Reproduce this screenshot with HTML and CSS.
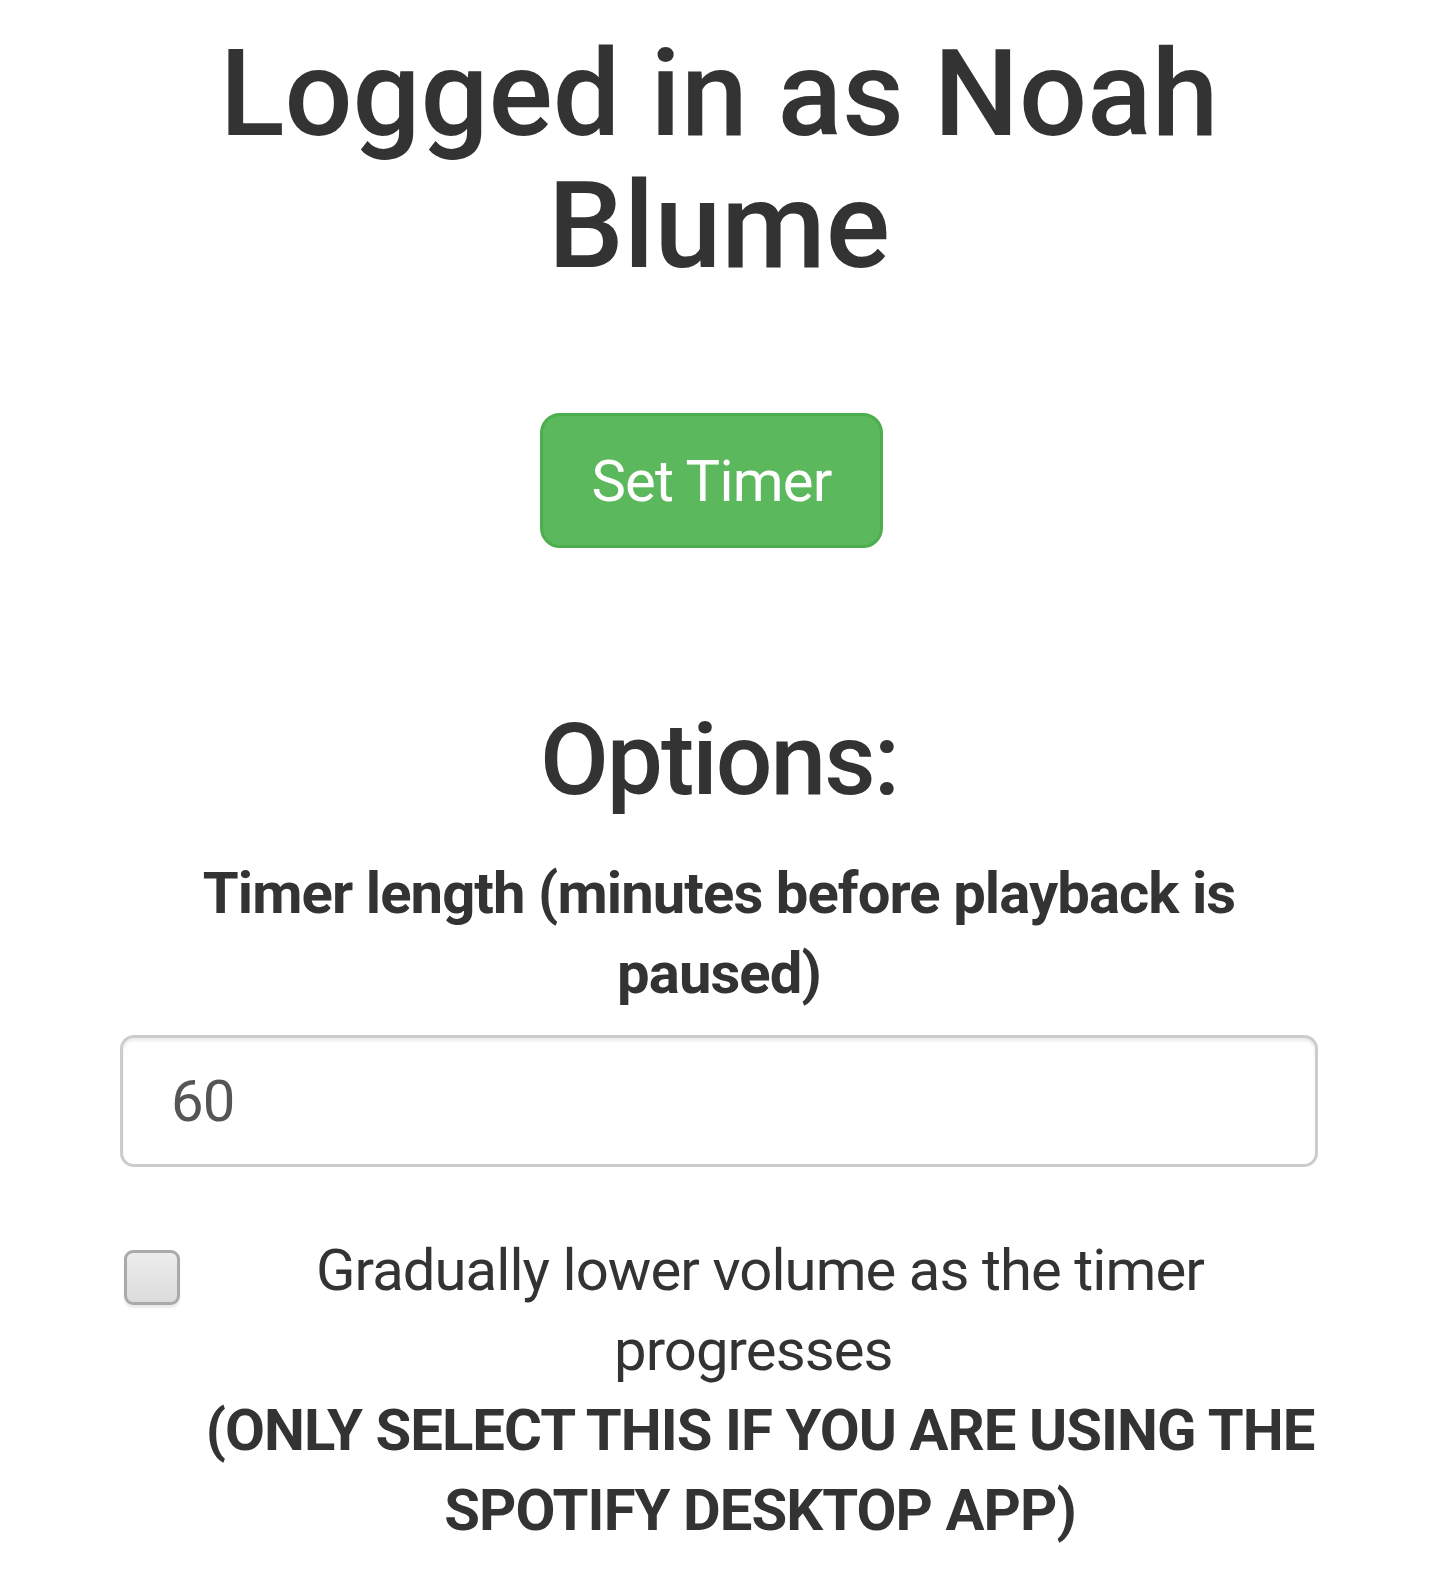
FILE: index.html
```html
<!DOCTYPE html>
<html lang="en">
<head>
<meta charset="utf-8">
<title>Sleep Timer</title>
<link rel="stylesheet" href="styles.css">
</head>
<body>
<div class="page">
  <h1 class="title">Logged in as Noah Blume</h1>
  <div class="actions">
    <button class="btn-set" type="button">Set Timer</button>
  </div>
  <h2 class="subtitle">Options:</h2>
  <label class="field-label" for="len">Timer length (minutes before playback is paused)</label>
  <input class="text-input" id="len" type="text" value="60">
  <div class="check-row">
    <div class="check-box-col"><span class="check-box"></span></div>
    <div class="check-text">
      <div class="check-main">Gradually lower volume as the timer progresses&nbsp;</div>
      <div class="check-note">(ONLY SELECT THIS IF YOU ARE USING THE SPOTIFY DESKTOP APP)</div>
    </div>
  </div>
</div>
</body>
</html>
```

FILE: styles.css
```css
html, body {
  margin: 0;
  padding: 0;
  background: #ffffff;
}
body {
  font-family: Roboto, "Liberation Sans", sans-serif;
  color: #333333;
}
.page {
  padding: 28px 122px 0 120px;
  display: flex;
  flex-direction: column;
}
.title {
  margin: 0;
  font-size: 120px;
  line-height: 132px;
  font-weight: 500;
  text-align: center;
}
.actions {
  margin-top: 121px;
  display: flex;
  justify-content: center;
  padding-right: 15px;
}
.btn-set {
  width: 343px;
  height: 135px;
  background: #5cb85c;
  border: 3px solid #4cae4c;
  border-radius: 20px;
  color: #ffffff;
  font-family: Roboto, "Liberation Sans", sans-serif;
  font-size: 58px;
  font-weight: 400;
  letter-spacing: -0.014em;
  padding: 0;
}
.subtitle {
  margin: 157px 0 0;
  font-size: 100px;
  line-height: 110px;
  font-weight: 500;
  letter-spacing: -0.02em;
  text-align: center;
}
.field-label {
  margin-top: 38px;
  font-size: 58px;
  line-height: 80px;
  font-weight: 700;
  letter-spacing: -0.016em;
  text-align: center;
}
.text-input {
  margin-top: 22px;
  box-sizing: border-box;
  width: 1198px;
  height: 132px;
  border: 3px solid #cccccc;
  border-radius: 14px;
  box-shadow: inset 0 3px 3px rgba(0, 0, 0, 0.075);
  padding: 0 0 0 48px;
  font-family: Roboto, "Liberation Sans", sans-serif;
  font-size: 58px;
  letter-spacing: -0.016em;
  color: #555555;
  outline: none;
}
.check-row {
  margin-top: 63px;
  display: flex;
}
.check-box-col {
  width: 82px;
  flex: none;
  padding-top: 20px;
}
.check-box {
  display: block;
  margin-left: 4px;
  width: 50px;
  height: 49px;
  border: 3px solid #aaaaaa;
  border-radius: 9px;
  background: linear-gradient(#ececec, #dcdcdc);
  box-shadow: 0 3px 2px rgba(0, 0, 0, 0.08);
}
.check-text {
  flex: 1;
  text-align: center;
  font-size: 58px;
  line-height: 80px;
  letter-spacing: -0.016em;
}
.check-main {
  font-weight: 400;
  padding: 0 80px;
}
.check-note {
  font-weight: 700;
}
```
